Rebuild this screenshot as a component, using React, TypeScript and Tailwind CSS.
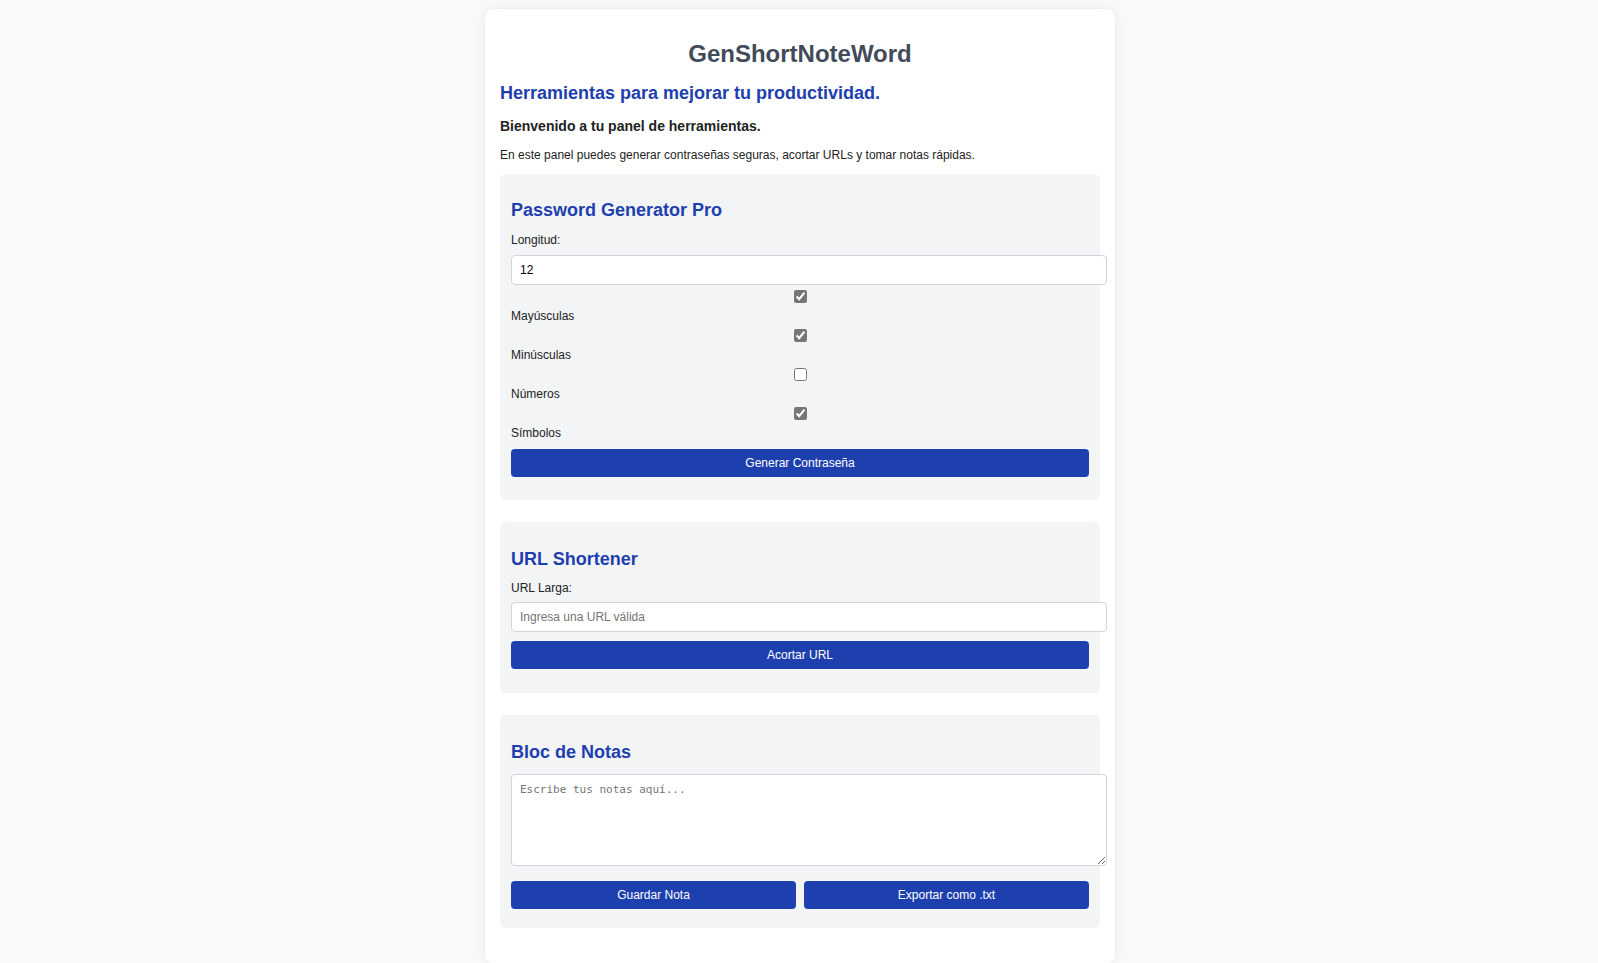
import { useState } from "react";

export default function App() {
  const [length, setLength] = useState("12");
  const [opts, setOpts] = useState({ upper: true, lower: true, numbers: false, symbols: true });
  const [url, setUrl] = useState("");
  const [note, setNote] = useState("");

  function toggle(key: keyof typeof opts) {
    setOpts((o) => ({ ...o, [key]: !o[key] }));
  }

  return (
    <div className="min-h-screen bg-[#f8f9fa] pl-[2px] pt-[9px] font-['Liberation_Sans',Arial,sans-serif] text-[#222]">
      <div className="mx-auto w-[630px] rounded-lg bg-white px-[15px] pt-[29px] pb-[35px] shadow-[0_0_10px_rgba(0,0,0,0.08)]">
        <h1 className="text-center text-2xl font-bold leading-8 text-[#424b59]">GenShortNoteWord</h1>
        <h2 className="mt-[9px] text-lg font-bold leading-7 text-[#1e40af]">Herramientas para mejorar tu productividad.</h2>
        <h3 className="mt-[9px] text-sm font-bold leading-5 text-[#222]">Bienvenido a tu panel de herramientas.</h3>
        <p className="mt-[11px] text-xs leading-4">
          En este panel puedes generar contraseñas seguras, acortar URLs y tomar notas rápidas.
        </p>

        {/* Password generator */}
        <section className="mt-[11px] rounded-md bg-[#f3f4f6] px-[11px] pt-[22px] pb-[23px]">
          <h2 className="text-lg font-bold leading-7 text-[#1e40af]">Password Generator Pro</h2>
          <label className="mt-[8px] block text-xs leading-4">Longitud:</label>
          <input
            type="number"
            value={length}
            onChange={(e) => setLength(e.target.value)}
            className="mt-[7px] block w-full box-content rounded border border-[#d1d5db] bg-white px-2 py-[7px] text-xs leading-[14px] text-black outline-none"
          />
          <div className="mt-[3px]">
            <Check checked={opts.upper} onChange={() => toggle("upper")} label="Mayúsculas" />
            <Check checked={opts.lower} onChange={() => toggle("lower")} label="Minúsculas" />
            <Check checked={opts.numbers} onChange={() => toggle("numbers")} label="Números" />
            <Check checked={opts.symbols} onChange={() => toggle("symbols")} label="Símbolos" />
          </div>
          <button className="mt-[8px] block h-7 w-full rounded bg-[#1e40af] text-xs text-white">Generar Contraseña</button>
        </section>

        {/* URL shortener */}
        <section className="mt-[22px] rounded-md bg-[#f3f4f6] px-[11px] pt-[23px] pb-[24px]">
          <h2 className="text-lg font-bold leading-7 text-[#1e40af]">URL Shortener</h2>
          <label className="mt-[7px] block text-xs leading-4">URL Larga:</label>
          <input
            type="text"
            value={url}
            onChange={(e) => setUrl(e.target.value)}
            placeholder="Ingresa una URL válida"
            className="mt-[6px] block w-full box-content rounded border border-[#d1d5db] bg-white px-2 py-[7px] text-xs leading-[14px] text-black outline-none placeholder:text-[#757575]"
          />
          <button className="mt-[9px] block h-7 w-full rounded bg-[#1e40af] text-xs text-white">Acortar URL</button>
        </section>

        {/* Notes */}
        <section className="mt-[22px] rounded-md bg-[#f3f4f6] px-[11px] pt-[23px] pb-[19px]">
          <h2 className="text-lg font-bold leading-7 text-[#1e40af]">Bloc de Notas</h2>
          <textarea
            value={note}
            onChange={(e) => setNote(e.target.value)}
            placeholder="Escribe tus notas aquí..."
            className="mt-[8px] block h-[74px] w-full box-content rounded border border-[#d1d5db] bg-white px-2 py-2 font-['DejaVu_Sans_Mono',monospace] text-[11px] leading-[14px] outline-none placeholder:text-[#757575]"
          />
          <div className="mt-[15px] flex gap-2">
            <button className="h-7 flex-1 rounded bg-[#1e40af] text-xs text-white">Guardar Nota</button>
            <button className="h-7 flex-1 rounded bg-[#1e40af] text-xs text-white">Exportar como .txt</button>
          </div>
        </section>
      </div>
    </div>
  );
}

function Check({ checked, onChange, label }: { checked: boolean; onChange: () => void; label: string }) {
  return (
    <div>
      <input
        type="checkbox"
        checked={checked}
        onChange={onChange}
        className="mx-auto mt-[5px] mb-[5px] block h-[13px] w-[13px] accent-[#767676]"
      />
      <label className="block text-xs leading-4">{label}</label>
    </div>
  );
}
